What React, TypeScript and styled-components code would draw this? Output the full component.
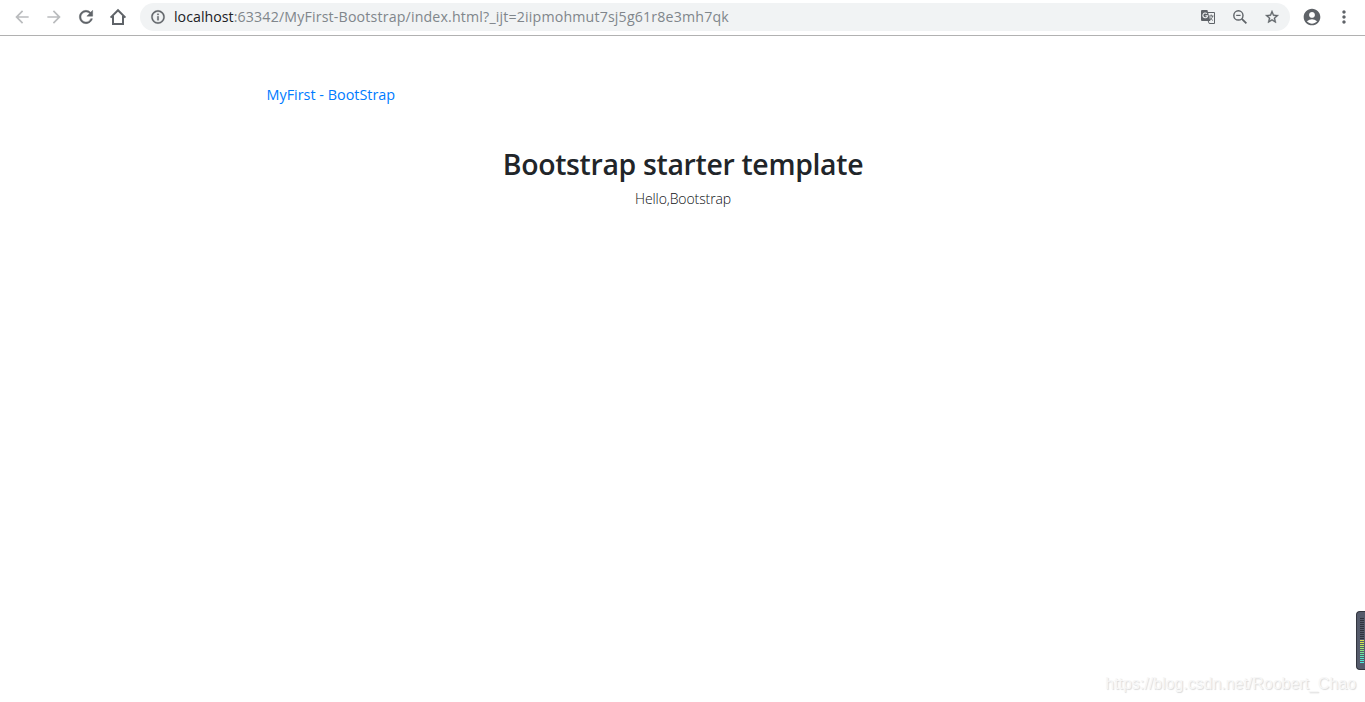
import React from "react";
import styled, { createGlobalStyle } from "styled-components";
import {
  MdArrowBack, MdArrowForward, MdRefresh, MdInfoOutline,
  MdStarBorder, MdAccountCircle, MdMoreVert,
} from "react-icons/md";

const GlobalStyle = createGlobalStyle`
  * { box-sizing: border-box; }
  body { margin: 0; background: #fff; overflow: hidden; font-family: "Open Sans", "Noto Sans", sans-serif; }
`;

const Window = styled.div`
  display: flex;
  flex-direction: column;
  width: 100%;
  height: 100vh;
`;

const Toolbar = styled.header`
  display: flex;
  align-items: flex-start;
  height: 36px;
  padding: 3px 5px 0 6px;
  border-bottom: 1px solid #b1b1b1;
`;

const IconButton = styled.span<{ $muted?: boolean; $weight?: number }>`
  display: flex;
  flex: none;
  align-items: center;
  justify-content: center;
  width: 32px;
  height: 28px;
  color: ${(p) => (p.$muted ? "#babcbe" : "#5f6368")};

  path:not([fill="none"]) {
    stroke-width: ${(p) => p.$weight};
  }

  svg[stroke="currentColor"] > path[fill="none"] {
    stroke: none;
  }
`;

const AddressBar = styled.div`
  display: flex;
  flex: 1;
  align-items: center;
  height: 28px;
  margin: 0 6px;
  padding: 0 2px;
  border-radius: 14px;
  background: #f1f3f4;
`;

const Url = styled.span`
  flex: 1;
  font-size: 14.2px;
  line-height: 28px;
  letter-spacing: 0.166px;
  white-space: nowrap;
  color: #80868b;
`;

const Host = styled.span`
  letter-spacing: 0.02px;
  color: #202124;
`;

const Page = styled.main`
  display: flex;
  flex: 1;
  flex-direction: column;
  width: 862px;
  margin: 0 auto;
  padding: 47px 15px 0;
`;

const Brand = styled.a`
  align-self: flex-start;
  font-size: 14.4px;
  line-height: 24px;
  white-space: nowrap;
  color: #007bff;
`;

const Starter = styled.section`
  display: flex;
  flex-direction: column;
  align-items: center;
  padding: 38px 0 0 1px;
`;

const Title = styled.h1`
  margin: 0;
  font-size: 28.4px;
  font-weight: 600;
  line-height: 38px;
  letter-spacing: -0.32px;
  white-space: nowrap;
  color: #212529;
`;

const Lead = styled.p`
  margin: 5px 0 0;
  font-size: 14px;
  font-weight: 300;
  line-height: 22px;
  letter-spacing: -0.1px;
  white-space: nowrap;
  color: #0d1013;
`;

const Meter = styled.aside`
  position: absolute;
  top: 611px;
  right: 0;
  display: flex;
  flex-direction: column;
  gap: 1px;
  width: 9px;
  height: 59px;
  padding: 6px 0 0 3px;
  border: 1px solid #33363f;
  border-right: 0;
  border-radius: 4px 0 0 4px;
  background: #555b6b;
`;

const Bar = styled.i<{ $color: string }>`
  flex: none;
  width: 4px;
  height: 1px;
  background: ${(p) => p.$color};
`;

const Watermark = styled.span`
  position: absolute;
  top: 674px;
  right: 9px;
  font: 16px/20px "Liberation Sans", sans-serif;
  letter-spacing: -0.03px;
  white-space: nowrap;
  color: #f7f7f7;
  text-shadow: 1px 1px 1px #dadada;
`;

const levels = [
  ...Array(11).fill("#2f333d"),
  "#d9e34b", "#d3e650", "#c2e85a", "#ade866", "#9be872", "#8ae982",
  "#78e995", "#68e9a6", "#5ce8b8", "#53e8c8", "#4fe9d2", "#4be9dc",
];

const HomeIcon = () => (
  <svg width="18" height="18" viewBox="0 0 18 18">
    <path d="M1.6 9.6 9 2.2l7.4 7.4M4 8v8h10V8" fill="none" stroke="currentColor" strokeWidth="2" />
  </svg>
);

const TranslateIcon = () => (
  <svg width="16" height="16" viewBox="0 0 16 16">
    <path d="M8 3.5h6.5v11H9.2L8 11.5" fill="none" stroke="currentColor" strokeWidth="1" />
    <path d="M9 7h4.5M11.2 5.5V7M12.7 7c-.4 1.8-1.4 3-2.9 4M10 8.3c.8 1.6 1.8 2.5 3 3.2" fill="none" stroke="currentColor" strokeWidth=".9" />
    <path d="M2 1h5.4l3 11H2a1 1 0 0 1-1-1V2a1 1 0 0 1 1-1Z" fill="currentColor" />
    <path d="M7 4.7A2.4 2.4 0 1 0 7.6 6.8H5.4" fill="none" stroke="#f1f3f4" strokeWidth="1.1" />
  </svg>
);

const ZoomOutIcon = () => (
  <svg width="16" height="16" viewBox="0 0 16 16">
    <circle cx="6.4" cy="6.4" r="4.6" fill="none" stroke="currentColor" strokeWidth="1.4" />
    <path d="m9.8 9.8 4.6 4.6" fill="none" stroke="currentColor" strokeWidth="1.8" />
    <path d="M4.2 6.4h4.4" fill="none" stroke="currentColor" strokeWidth="1.2" />
  </svg>
);

export default function App() {
  return (
    <Window>
      <GlobalStyle />
      <Toolbar>
        <IconButton $muted $weight={0}><MdArrowBack size={20} /></IconButton>
        <IconButton $muted $weight={0}><MdArrowForward size={20} /></IconButton>
        <IconButton $weight={0.5}><MdRefresh size={20} /></IconButton>
        <IconButton><HomeIcon /></IconButton>
        <AddressBar>
          <IconButton $weight={0.4}><MdInfoOutline size={16} /></IconButton>
          <Url><Host>localhost</Host>:63342/MyFirst-Bootstrap/index.html?_ijt=2iipmohmut7sj5g61r8e3mh7qk</Url>
          <IconButton $weight={0}><TranslateIcon /></IconButton>
          <IconButton><ZoomOutIcon /></IconButton>
          <IconButton $weight={0.5}><MdStarBorder size={16} /></IconButton>
        </AddressBar>
        <IconButton $weight={0}><MdAccountCircle size={20} /></IconButton>
        <IconButton $weight={0}><MdMoreVert size={20} /></IconButton>
      </Toolbar>
      <Page>
        <Brand>MyFirst - BootStrap</Brand>
        <Starter>
          <Title>Bootstrap starter template</Title>
          <Lead>Hello,Bootstrap</Lead>
        </Starter>
      </Page>
      <Meter>{levels.map((color, i) => <Bar key={i} $color={color} />)}</Meter>
      <Watermark>https://blog.csdn.net/Roobert_Chao</Watermark>
    </Window>
  );
}
